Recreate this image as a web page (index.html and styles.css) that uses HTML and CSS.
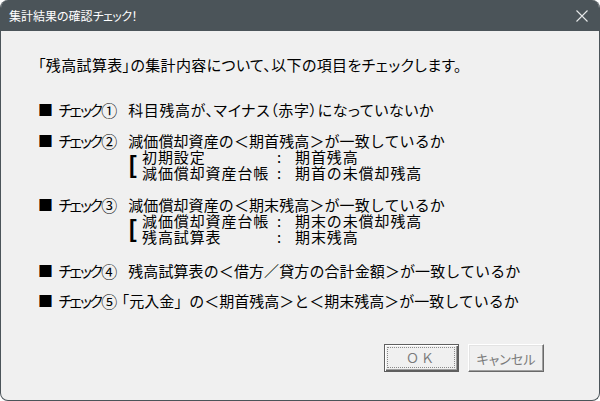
FILE: index.html
```html
<!DOCTYPE html>
<html lang="ja">
<head>
<meta charset="utf-8">
<title>集計結果の確認チェック！</title>
<link rel="stylesheet" href="styles.css">
</head>
<body>
<div class="window">
  <div class="titlebar">
    <span class="title">集計結果の確認<span class="kata">チェック！</span></span>
    <svg class="close" width="12" height="12" viewBox="0 0 12 12"><path d="M0.5 0.5 L11.5 11.5 M11.5 0.5 L0.5 11.5" stroke="#e6e8e9" stroke-width="1.1" fill="none"/></svg>
  </div>
  <div class="content">
    <p class="intro">「残高試算表」の集計内容について、以下の項目をチェックします。</p>

    <div class="check c1"><span class="bullet">■</span><span class="label"><span class="kk">チェック</span><span class="num">①</span></span><span class="text t1">科目残高が、マイナス（赤字）になっていないか</span></div>

    <div class="check c2"><span class="bullet">■</span><span class="label"><span class="kk">チェック</span><span class="num">②</span></span><span class="text">減価償却資産の＜期首残高＞が一致しているか</span></div>
    <div class="detail">
      <span class="bracket">[</span>
      <div class="pairs">
        <span class="k">初期設定</span><span class="colon">:</span><span class="v">期首残高</span>
        <span class="k">減価償却資産台帳</span><span class="colon">:</span><span class="v">期首の未償却残高</span>
      </div>
    </div>

    <div class="check c3"><span class="bullet">■</span><span class="label"><span class="kk">チェック</span><span class="num">③</span></span><span class="text">減価償却資産の＜期末残高＞が一致しているか</span></div>
    <div class="detail">
      <span class="bracket">[</span>
      <div class="pairs">
        <span class="k">減価償却資産台帳</span><span class="colon">:</span><span class="v">期末の未償却残高</span>
        <span class="k">残高試算表</span><span class="colon">:</span><span class="v">期末残高</span>
      </div>
    </div>

    <div class="check c4"><span class="bullet">■</span><span class="label"><span class="kk">チェック</span><span class="num">④</span></span><span class="text">残高試算表の＜借方／貸方の合計金額＞が一致しているか</span></div>

    <div class="check c5"><span class="bullet">■</span><span class="label"><span class="kk">チェック</span><span class="num">⑤</span></span><span class="text t5">「元入金」の＜期首残高＞と＜期末残高＞が一致しているか</span></div>

    <div class="buttons">
      <button class="btn default"><span class="focus">ＯＫ</span></button>
      <button class="btn cancel">キャンセル</button>
    </div>
  </div>
</div>
</body>
</html>
```

FILE: styles.css
```css
html, body {
  margin: 0;
  padding: 0;
  background: #ffffff;
}

.window {
  width: 600px;
  height: 401px;
  box-sizing: border-box;
  border: 1px solid #4b5459;
  border-top: none;
  border-radius: 8px;
  overflow: hidden;
  background: #f0f0f0;
  font-family: "Noto Sans CJK JP", "Noto Sans", sans-serif;
  color: #000;
}

.titlebar {
  height: 31px;
  background: #4b5459;
  display: flex;
  align-items: center;
  justify-content: space-between;
  padding: 0 11px 0 8px;
}

.title {
  color: #ffffff;
  font-size: 12px;
  line-height: 16px;
  font-feature-settings: "palt";
}

.title .kata {
  letter-spacing: -0.5px;
}

.close {
  display: block;
}

.content {
  display: flex;
  flex-direction: column;
  align-items: flex-start;
  font-size: 15px;
  line-height: 16px;
}

.intro {
  margin: 26px 0 0 37px;
  font-feature-settings: "palt";
  letter-spacing: 0.35px;
  white-space: nowrap;
}

.check {
  display: flex;
  align-items: center;
  margin-left: 37px;
  white-space: nowrap;
}

.c1 { margin-top: 29px; }
.c2 { margin-top: 15px; }
.c3 { margin-top: 16px; }
.c4 { margin-top: 18px; }
.c5 { margin-top: 14px; }

.bullet {
  width: 20px;
}

.label {
  display: flex;
  align-items: center;
}

.kk {
  letter-spacing: -4.7px;
}

.num {
  margin-left: 2px;
  font-size: 16px;
}

.text {
  margin-left: 11px;
  letter-spacing: 0.1px;
}

.t1 {
  font-feature-settings: "palt";
  letter-spacing: 0.6px;
}

.t5 {
  margin-left: -3px;
  letter-spacing: 0px;
}

.detail {
  display: flex;
  align-items: center;
  margin-left: 128px;
  height: 32px;
}

.bracket {
  width: 13px;
  font-family: "Liberation Sans", Arial, sans-serif;
  font-weight: bold;
  font-size: 23px;
  line-height: 32px;
}

.pairs {
  display: grid;
  grid-template-columns: 135px 18px auto;
  grid-auto-rows: 16px;
  white-space: nowrap;
}

.k, .v {
  letter-spacing: 0.9px;
}

.buttons {
  align-self: stretch;
  display: flex;
  justify-content: flex-end;
  gap: 9px;
  padding-right: 55px;
  margin-top: 35px;
}

.btn {
  height: 28px;
  margin: 0;
  padding: 0;
  background: #f0f0f0;
  font-family: "Noto Sans CJK JP", sans-serif;
  font-size: 13px;
  color: #7a7a7a;
  box-sizing: border-box;
  display: flex;
  align-items: center;
  justify-content: center;
}

.default {
  width: 75px;
  border: 1px solid #5f5f5f;
  box-shadow: inset 1px 1px 0 #ffffff, inset -1px -1px 0 #5f5f5f, inset -2px -2px 0 #a0a0a0;
  padding: 3px 4px 4px 3px;
}

.focus {
  flex: 1;
  align-self: stretch;
  display: flex;
  align-items: center;
  justify-content: center;
  outline: 1px dotted #8a8a8a;
  font-size: 13px;
  letter-spacing: 2px;
}

.cancel {
  width: 76px;
  border: 1px solid;
  border-color: #ffffff #696969 #696969 #ffffff;
  box-shadow: inset -1px -1px 0 #a0a0a0, inset 1px 1px 0 #e3e3e3;
  font-feature-settings: "palt";
}
```
